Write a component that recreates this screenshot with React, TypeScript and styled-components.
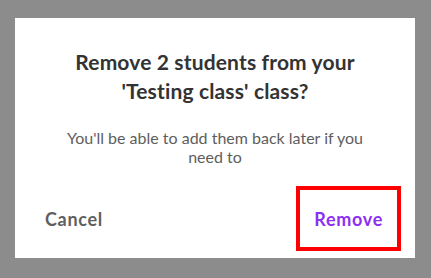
import React from "react";
import styled, { createGlobalStyle } from "styled-components";

const GlobalStyle = createGlobalStyle`
  html, body {
    margin: 0;
    padding: 0;
    background: #8c8c8c;
  }
`;

const Backdrop = styled.div`
  width: 431px;
  height: 278px;
  box-sizing: border-box;
  padding: 18px 16px 20px 15px;
  background: #8c8c8c;
  font-family: "Lato", "Open Sans", sans-serif;
`;

const Dialog = styled.div`
  width: 400px;
  height: 240px;
  box-sizing: border-box;
  background: #ffffff;
  display: flex;
  flex-direction: column;
  align-items: center;
  padding: 29px 0 7px;
`;

const Title = styled.h2`
  margin: 0;
  width: 320px;
  font-size: 21px;
  line-height: 29px;
  font-weight: 700;
  letter-spacing: 0.15px;
  color: #333333;
  text-align: center;
`;

const Message = styled.p`
  margin: 23px 0 0;
  width: 310px;
  font-size: 16px;
  line-height: 19px;
  font-weight: 400;
  color: #5e5e5e;
  text-align: center;
`;

const Footer = styled.div`
  margin-top: auto;
  width: 100%;
  box-sizing: border-box;
  padding: 0 14px 0 12px;
  display: flex;
  justify-content: space-between;
  align-items: center;
`;

const Button = styled.button<{ $primary?: boolean; $highlight?: boolean }>`
  height: 65px;
  box-sizing: border-box;
  padding: 0 14px;
  background: none;
  border: 4px solid ${(p) => (p.$highlight ? "#ff0000" : "transparent")};
  font-family: inherit;
  font-size: 18px;
  font-weight: 700;
  letter-spacing: 0.7px;
  color: ${(p) => (p.$primary ? "#8c2ff5" : "#5f5f5f")};
  cursor: pointer;
`;

export default function App() {
  return (
    <>
      <GlobalStyle />
      <Backdrop>
        <Dialog>
          <Title>Remove 2 students from your 'Testing class' class?</Title>
          <Message>You'll be able to add them back later if you need to</Message>
          <Footer>
            <Button>Cancel</Button>
            <Button $primary $highlight>
              Remove
            </Button>
          </Footer>
        </Dialog>
      </Backdrop>
    </>
  );
}
